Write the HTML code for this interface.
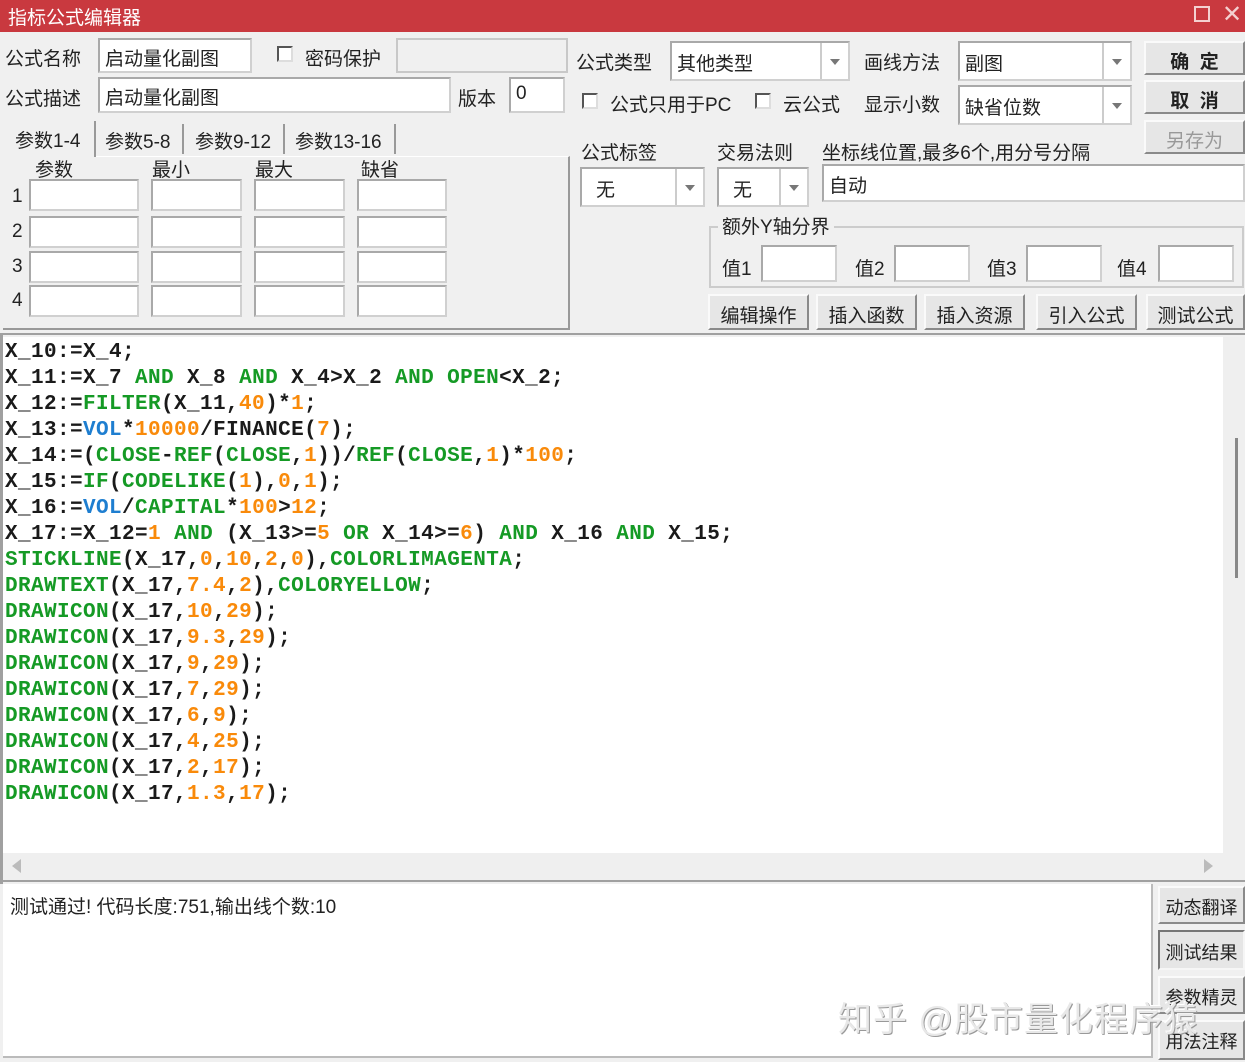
<!DOCTYPE html>
<html><head><meta charset="utf-8"><style>
*{box-sizing:border-box;margin:0;padding:0}
body{width:1245px;height:1062px;background:#f0f0f0;position:relative;overflow:hidden;font-family:"Liberation Sans","Noto Sans CJK SC",sans-serif;font-size:19px;color:#222}
.a{position:absolute;white-space:nowrap}
.in{position:absolute;background:#fff;border:2px solid #a9a9a9;border-right-color:#d0d0d0;border-bottom-color:#d0d0d0}
.btn{position:absolute;background:#e6e6e6;border:2px solid #8a8a8a;border-top-color:#fafafa;border-left-color:#fafafa;text-align:center;font-size:19px}
.cb{position:absolute;width:16px;height:16px;border:2px solid #555;border-right-color:#ddd;border-bottom-color:#ddd;background:#fff}
.dd{position:absolute;top:0;right:0;width:28px;height:100%;border-left:2px solid #ccc}
.dd:after{content:"";position:absolute;left:8px;top:50%;margin-top:-2px;border:5px solid transparent;border-top:6px solid #777}
#code{position:absolute;left:3px;top:337px;width:1220px;height:516px;background:#fff;font-family:"Liberation Mono",monospace;font-weight:bold;font-size:21px;letter-spacing:0.4px;line-height:26px;padding:3px 0 0 2px;white-space:pre;color:#1a1a1a}
.g{color:#159a25}.o{color:#f98a0a}.b{color:#1e7ed0}
</style></head><body>
<div class="a" style="left:0;top:0;width:1245px;height:32px;background:#c9393f;color:#fff;font-size:19px;padding:3px 0 0 8px">指标公式编辑器</div>
<div class="a" style="left:1194px;top:6px;width:16px;height:16px;border:2px solid #f4d0d0"></div>
<div class="a" style="left:1222px;top:0px;color:#f4d0d0;font-size:24px">✕</div>

<div class="a" style="left:5px;top:44px">公式名称</div>
<div class="in" style="left:98px;top:38px;width:154px;height:35px;padding:4px 5px">启动量化副图</div>
<div class="cb" style="left:277px;top:46px"></div>
<div class="a" style="left:305px;top:44px">密码保护</div>
<div class="a" style="left:396px;top:38px;width:172px;height:35px;border:2px solid #c8c8c8;background:#f0f0f0"></div>
<div class="a" style="left:5px;top:84px">公式描述</div>
<div class="in" style="left:98px;top:77px;width:353px;height:36px;padding:4px 5px">启动量化副图</div>
<div class="a" style="left:458px;top:84px">版本</div>
<div class="in" style="left:509px;top:77px;width:56px;height:36px;padding:4px 5px">0</div>

<div class="a" style="left:3px;top:121px;width:93px;height:36px;border-right:2px solid #999;background:#f0f0f0;padding:5px 12px;z-index:2">参数1-4</div>
<div class="a" style="left:105px;top:127px">参数5-8</div>
<div class="a" style="left:182px;top:124px;height:30px;border-left:2px solid #999"></div>
<div class="a" style="left:195px;top:127px">参数9-12</div>
<div class="a" style="left:283px;top:124px;height:30px;border-left:2px solid #999"></div>
<div class="a" style="left:295px;top:127px">参数13-16</div>
<div class="a" style="left:394px;top:124px;height:30px;border-left:2px solid #999"></div>
<div class="a" style="left:3px;top:156px;width:567px;height:174px;border-right:2px solid #999;border-bottom:2px solid #999;border-top:1px solid #fff"></div>
<div class="a" style="left:35px;top:155px">参数</div>
<div class="a" style="left:152px;top:155px">最小</div>
<div class="a" style="left:255px;top:155px">最大</div>
<div class="a" style="left:361px;top:155px">缺省</div>
<div class="a" style="left:12px;top:186px">1</div><div class="a" style="left:12px;top:221px">2</div><div class="a" style="left:12px;top:256px">3</div><div class="a" style="left:12px;top:290px">4</div>
<div class="in" style="left:29px;top:179px;width:110px;height:32px"></div><div class="in" style="left:151px;top:179px;width:91px;height:32px"></div><div class="in" style="left:254px;top:179px;width:91px;height:32px"></div><div class="in" style="left:357px;top:179px;width:90px;height:32px"></div>
<div class="in" style="left:29px;top:216px;width:110px;height:32px"></div><div class="in" style="left:151px;top:216px;width:91px;height:32px"></div><div class="in" style="left:254px;top:216px;width:91px;height:32px"></div><div class="in" style="left:357px;top:216px;width:90px;height:32px"></div>
<div class="in" style="left:29px;top:251px;width:110px;height:32px"></div><div class="in" style="left:151px;top:251px;width:91px;height:32px"></div><div class="in" style="left:254px;top:251px;width:91px;height:32px"></div><div class="in" style="left:357px;top:251px;width:90px;height:32px"></div>
<div class="in" style="left:29px;top:285px;width:110px;height:32px"></div><div class="in" style="left:151px;top:285px;width:91px;height:32px"></div><div class="in" style="left:254px;top:285px;width:91px;height:32px"></div><div class="in" style="left:357px;top:285px;width:90px;height:32px"></div>

<div class="a" style="left:576px;top:48px">公式类型</div>
<div class="in" style="left:670px;top:41px;width:180px;height:40px;padding:6px 5px">其他类型<div class="dd"></div></div>
<div class="a" style="left:864px;top:48px">画线方法</div>
<div class="in" style="left:958px;top:41px;width:174px;height:40px;padding:6px 5px">副图<div class="dd"></div></div>
<div class="cb" style="left:582px;top:93px"></div>
<div class="a" style="left:610px;top:90px">公式只用于PC</div>
<div class="cb" style="left:755px;top:93px"></div>
<div class="a" style="left:783px;top:90px">云公式</div>
<div class="a" style="left:864px;top:90px">显示小数</div>
<div class="in" style="left:958px;top:85px;width:174px;height:40px;padding:6px 5px">缺省位数<div class="dd"></div></div>
<div class="btn" style="left:1144px;top:41px;width:101px;height:34px;padding-top:4px;font-weight:bold">确&nbsp;&nbsp;定</div>
<div class="btn" style="left:1144px;top:80px;width:101px;height:34px;padding-top:4px;font-weight:bold">取&nbsp;&nbsp;消</div>
<div class="btn" style="left:1144px;top:120px;width:101px;height:34px;padding-top:4px;color:#999">另存为</div>

<div class="a" style="left:581px;top:138px">公式标签</div>
<div class="a" style="left:717px;top:138px">交易法则</div>
<div class="a" style="left:822px;top:138px">坐标线位置,最多6个,用分号分隔</div>
<div class="in" style="left:580px;top:167px;width:125px;height:40px;padding:6px 14px">无<div class="dd"></div></div>
<div class="in" style="left:717px;top:167px;width:92px;height:40px;padding:6px 14px">无<div class="dd"></div></div>
<div class="in" style="left:822px;top:164px;width:423px;height:38px;padding:5px 5px">自动</div>

<div class="a" style="left:709px;top:226px;width:535px;height:62px;border:2px solid #ccc"></div>
<div class="a" style="left:718px;top:212px;background:#f0f0f0;padding:0 4px">额外Y轴分界</div>
<div class="a" style="left:722px;top:254px">值1</div><div class="in" style="left:761px;top:245px;width:76px;height:37px"></div>
<div class="a" style="left:855px;top:254px">值2</div><div class="in" style="left:894px;top:245px;width:76px;height:37px"></div>
<div class="a" style="left:987px;top:254px">值3</div><div class="in" style="left:1026px;top:245px;width:76px;height:37px"></div>
<div class="a" style="left:1117px;top:254px">值4</div><div class="in" style="left:1158px;top:245px;width:76px;height:37px"></div>
<div class="btn" style="left:708px;top:294px;width:101px;height:36px;padding-top:5px">编辑操作</div>
<div class="btn" style="left:816px;top:294px;width:101px;height:36px;padding-top:5px">插入函数</div>
<div class="btn" style="left:924px;top:294px;width:101px;height:36px;padding-top:5px">插入资源</div>
<div class="btn" style="left:1036px;top:294px;width:101px;height:36px;padding-top:5px">引入公式</div>
<div class="btn" style="left:1146px;top:294px;width:99px;height:36px;padding-top:5px">测试公式</div>

<div class="a" style="left:0;top:333px;width:1245px;height:551px;border-top:2px solid #a0a0a0;border-left:3px solid #a0a0a0"></div>
<div id="code">X_10:=X_4;
X_11:=X_7 <span class="g">AND</span> X_8 <span class="g">AND</span> X_4&gt;X_2 <span class="g">AND</span> <span class="g">OPEN</span>&lt;X_2;
X_12:=<span class="g">FILTER</span>(X_11,<span class="o">40</span>)*<span class="o">1</span>;
X_13:=<span class="b">VOL</span>*<span class="o">10000</span>/FINANCE(<span class="o">7</span>);
X_14:=(<span class="g">CLOSE</span>-<span class="g">REF</span>(<span class="g">CLOSE</span>,<span class="o">1</span>))/<span class="g">REF</span>(<span class="g">CLOSE</span>,<span class="o">1</span>)*<span class="o">100</span>;
X_15:=<span class="g">IF</span>(<span class="g">CODELIKE</span>(<span class="o">1</span>),<span class="o">0</span>,<span class="o">1</span>);
X_16:=<span class="b">VOL</span>/<span class="g">CAPITAL</span>*<span class="o">100</span>&gt;<span class="o">12</span>;
X_17:=X_12=<span class="o">1</span> <span class="g">AND</span> (X_13&gt;=<span class="o">5</span> <span class="g">OR</span> X_14&gt;=<span class="o">6</span>) <span class="g">AND</span> X_16 <span class="g">AND</span> X_15;
<span class="g">STICKLINE</span>(X_17,<span class="o">0</span>,<span class="o">10</span>,<span class="o">2</span>,<span class="o">0</span>),<span class="g">COLORLIMAGENTA</span>;
<span class="g">DRAWTEXT</span>(X_17,<span class="o">7.4</span>,<span class="o">2</span>),<span class="g">COLORYELLOW</span>;
<span class="g">DRAWICON</span>(X_17,<span class="o">10</span>,<span class="o">29</span>);
<span class="g">DRAWICON</span>(X_17,<span class="o">9.3</span>,<span class="o">29</span>);
<span class="g">DRAWICON</span>(X_17,<span class="o">9</span>,<span class="o">29</span>);
<span class="g">DRAWICON</span>(X_17,<span class="o">7</span>,<span class="o">29</span>);
<span class="g">DRAWICON</span>(X_17,<span class="o">6</span>,<span class="o">9</span>);
<span class="g">DRAWICON</span>(X_17,<span class="o">4</span>,<span class="o">25</span>);
<span class="g">DRAWICON</span>(X_17,<span class="o">2</span>,<span class="o">17</span>);
<span class="g">DRAWICON</span>(X_17,<span class="o">1.3</span>,<span class="o">17</span>);</div>
<div class="a" style="left:1223px;top:337px;width:22px;height:516px;background:#efefef"></div>
<div class="a" style="left:1235px;top:438px;width:3px;height:140px;background:#888"></div>
<div class="a" style="left:3px;top:853px;width:1242px;height:27px;background:#efefef"></div>
<div class="a" style="left:12px;top:859px;border:7px solid transparent;border-right:9px solid #bbb;border-left:0"></div>
<div class="a" style="left:1204px;top:859px;border:7px solid transparent;border-left:9px solid #bbb;border-right:0"></div>
<div class="a" style="left:0;top:880px;width:1245px;height:2px;background:#a0a0a0"></div>

<div class="a" style="left:3px;top:884px;width:1150px;height:174px;background:#fff;border-right:2px solid #bbb;border-bottom:2px solid #bbb"></div>
<div class="a" style="left:10px;top:892px;font-size:19px">测试通过! 代码长度:751,输出线个数:10</div>
<div class="btn" style="left:1158px;top:886px;width:87px;height:38px;padding-top:6px;font-size:18px">动态翻译</div>
<div class="btn" style="left:1158px;top:930px;width:87px;height:40px;padding-top:7px;font-size:18px;border-color:#777 #f6f6f6 #f6f6f6 #777">测试结果</div>
<div class="btn" style="left:1158px;top:976px;width:87px;height:38px;padding-top:6px;font-size:18px">参数精灵</div>
<div class="btn" style="left:1158px;top:1020px;width:87px;height:40px;padding-top:6px;font-size:18px">用法注释</div>
<div class="a" style="left:838px;top:992px;font-size:34px;color:#e8e8e8;text-shadow:1px 1px 0 #999,-1px -1px 0 #fff;letter-spacing:1px;z-index:5">知乎 @股市量化程序猿</div>
</body></html>
